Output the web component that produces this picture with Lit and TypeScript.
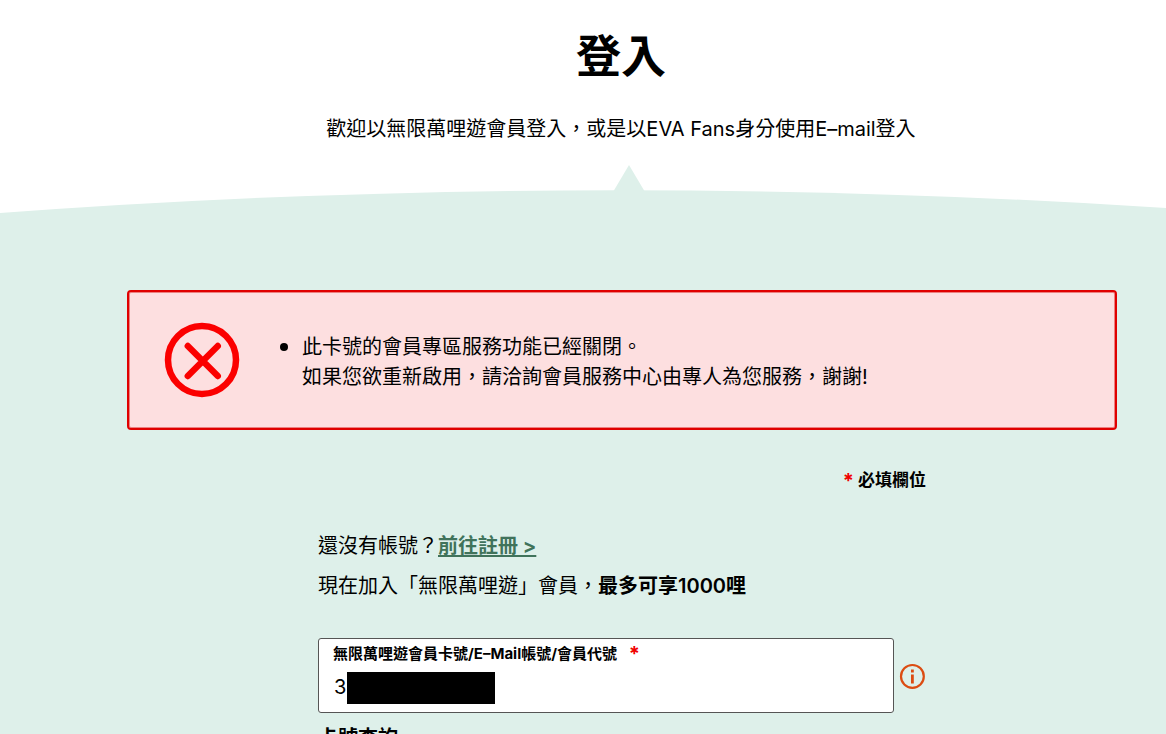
import { LitElement, html, css } from "lit";
import { customElement, state } from "lit/decorators.js";

@customElement("app-root")
export class AppRoot extends LitElement {
  static styles = css`
    :host {
      display: block;
      min-height: 100vh;
      background: #def0ea;
      color: #000;
      font-family: Inter, "Noto Sans CJK TC", sans-serif;
      font-size: 20px;
      line-height: 30px;
    }
    * {
      box-sizing: border-box;
    }
    .intro {
      padding: 25px 0 21px 76px;
      background: #fff;
      text-align: center;
    }
    h1 {
      margin: 0 0 25px;
      font-size: 45px;
      line-height: 64px;
      font-weight: 700;
    }
    p {
      margin: 0;
    }
    .curve {
      display: block;
      width: 100%;
      height: 50px;
      background: #fff;
    }
    .curve path {
      fill: #def0ea;
    }
    .content {
      padding: 75px 49px 0 127px;
    }
    .alert {
      display: flex;
      align-items: center;
      gap: 42px;
      padding: 30px 34px 28px;
      border: 2px solid #e00000;
      border-radius: 4px;
      background: #fddfe0;
      box-shadow: inset 0 0 0 1px #ec8080;
    }
    .alert svg {
      flex: none;
      width: 78px;
      height: 78px;
    }
    .alert ul {
      margin: 0;
      padding: 0 0 0 19px;
    }
    .alert li::marker {
      font-size: 24px;
    }
    .form {
      max-width: 608px;
      margin: 35px auto 0;
    }
    .required {
      font-size: 17px;
      font-weight: 700;
      text-align: right;
    }
    .star {
      color: #f00000;
      font-size: 20px;
      line-height: 20px;
      vertical-align: -2px;
    }
    .join {
      display: grid;
      gap: 10px;
      padding: 36px 0 37px;
    }
    a {
      color: #40735b;
      font-weight: 700;
      text-underline-offset: 2px;
    }
    b {
      font-weight: 600;
    }
    .row {
      display: flex;
      align-items: center;
      gap: 5px;
    }
    .field {
      position: relative;
      flex: 0 1 576px;
      height: 75px;
      padding: 4px 14px;
      border: 1px solid #555;
      border-radius: 3px;
      background: #fff;
    }
    .field label {
      display: block;
      height: 22px;
      font-size: 15px;
      line-height: 22px;
      font-weight: 700;
    }
    .field .star {
      margin-left: 8px;
    }
    .field input {
      display: block;
      width: 100%;
      height: 44px;
      padding: 0 1px;
      border: 0;
      outline: 0;
      background: transparent;
      color: #000;
      font: inherit;
    }
    .mask {
      position: absolute;
      left: 28px;
      top: 33px;
      width: 148px;
      height: 32px;
      background: #000;
    }
    .info {
      flex: none;
      display: block;
      width: 26px;
      height: 26px;
      padding: 0;
      border: 0;
      background: none;
    }
    .info svg {
      display: block;
    }
    h2 {
      margin: 10px 0 0;
      font-size: 20px;
      line-height: 30px;
    }
  `;

  @state() private account = "3";

  private onInput(e: Event) {
    this.account = (e.target as HTMLInputElement).value;
  }

  render() {
    return html`
      <header class="intro">
        <h1>登入</h1>
        <p>歡迎以無限萬哩遊會員登入，或是以EVA Fans身分使用E–mail登入</p>
      </header>
      <svg class="curve" viewBox="0 0 1166 50" preserveAspectRatio="none" aria-hidden="true">
        <path d="M0 48Q583 5 1166 43V50H0Z" />
        <path d="M629 0L645 27H613Z" />
      </svg>
      <main class="content">
        <section class="alert" role="alert">
          <svg viewBox="0 0 78 78" fill="none" stroke="#fb0000" aria-hidden="true">
            <circle cx="39" cy="38" r="34" stroke-width="6.5" />
            <path d="M24.8 24L54.8 54M54.8 24L24.8 54" stroke-width="6.4" stroke-linecap="round" />
          </svg>
          <ul>
            <li>此卡號的會員專區服務功能已經關閉。<br />如果您欲重新啟用，請洽詢會員服務中心由專人為您服務，謝謝!</li>
          </ul>
        </section>
        <form class="form">
          <p class="required"><span class="star">*</span> 必填欄位</p>
          <div class="join">
            <p>還沒有帳號？<a href="#register">前往註冊 &gt;</a></p>
            <p>現在加入「無限萬哩遊」會員，<b>最多可享1000哩</b></p>
          </div>
          <div class="row">
            <div class="field">
              <label for="account">無限萬哩遊會員卡號/E–Mail帳號/會員代號 <span class="star">*</span></label>
              <input id="account" type="text" .value=${this.account} @input=${this.onInput} required />
              <span class="mask"></span>
            </div>
            <button class="info" type="button" aria-label="說明">
              <svg width="26" height="26" viewBox="0 0 26 26" fill="none" stroke="#dc4c12" aria-hidden="true">
                <circle cx="13.4" cy="13.4" r="11.4" stroke-width="2.2" />
                <path d="M13.4 11.4V20.4M13.4 6.6V9.4" stroke-width="2.8" />
              </svg>
            </button>
          </div>
          <h2>卡號查詢</h2>
        </form>
      </main>
    `;
  }
}
